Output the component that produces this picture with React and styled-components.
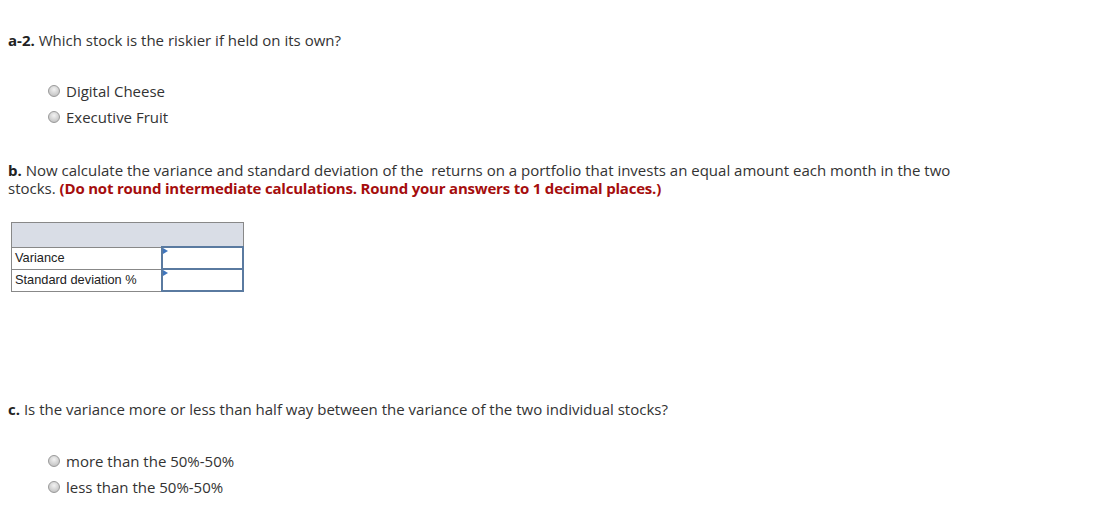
import styled, { createGlobalStyle } from "styled-components";

const Global = createGlobalStyle`
  body {
    margin: 0;
    background: #fff;
    font-family: "Open Sans", "Liberation Sans", sans-serif;
    color: #333;
  }
`;

const Page = styled.div`
  padding: 31px 0 0 8px;
  font-size: 15px;
  line-height: 18px;
`;

const Question = styled.p`
  margin: ${(p) => p.$top || 0}px 0 0;
  max-width: ${(p) => p.$width || 1000}px;
  b { color: #222; font-weight: 700; }
`;

const Note = styled.strong`
  color: #a50d0d;
  font-weight: 700;
  letter-spacing: -0.2px;
`;

const Choices = styled.div`
  margin: ${(p) => p.$top}px 0 0 40px;
  display: flex;
  flex-direction: column;
  gap: 8px;
`;

const Choice = styled.label`
  display: flex;
  align-items: center;
  gap: 6px;
  height: 18px;
`;

const Radio = styled.span`
  width: 10px;
  height: 10px;
  border-radius: 50%;
  border: 1px solid #999;
  background: radial-gradient(circle at 50% 35%, #f2f2f2 0%, #d2d2d2 55%, #b8b8b8 100%);
`;

const Table = styled.table`
  margin: 25px 0 0 3px;
  border-collapse: collapse;
  font-family: "Liberation Sans", Arial, sans-serif;
  font-size: 12.8px;
  color: #222;
`;

const Head = styled.td`
  height: 21px;
  background: #d9dde6;
  border: 1px solid #888;
`;

const Label = styled.td`
  width: 143px;
  height: 21px;
  padding: 0 3px;
  border: 1px solid #888;
`;

const InputCell = styled.td`
  width: 79px;
  padding: 0;
  border: 2px solid #5a7aa0;
  position: relative;
  &::before {
    content: "";
    position: absolute;
    left: 0;
    top: 0;
    border-left: 5px solid #3f75bd;
    border-top: 3px solid transparent;
    border-bottom: 3px solid transparent;
  }
`;

const options = (list) =>
  list.map((t) => (
    <Choice key={t}>
      <Radio />
      {t}
    </Choice>
  ));

export default function App() {
  return (
    <Page>
      <Global />
      <Question>
        <b>a-2.</b> Which stock is the riskier if held on its own?
      </Question>
      <Choices $top={33}>{options(["Digital Cheese", "Executive Fruit"])}</Choices>
      <Question $top={35} $width={965}>
        <b>b.</b> Now calculate the variance and standard deviation of the&nbsp; returns on a portfolio that invests an equal amount each month in the two stocks.{" "}
        <Note>(Do not round intermediate calculations. Round your answers to 1 decimal places.)</Note>
      </Question>
      <Table>
        <tbody>
          <tr>
            <Head colSpan={2} />
          </tr>
          <tr>
            <Label>Variance</Label>
            <InputCell />
          </tr>
          <tr>
            <Label>Standard deviation %</Label>
            <InputCell />
          </tr>
        </tbody>
      </Table>
      <Question $top={108}>
        <b>c.</b> Is the variance more or less than half way between the variance of the two individual stocks?
      </Question>
      <Choices $top={34}>{options(["more than the 50%-50%", "less than the 50%-50%"])}</Choices>
    </Page>
  );
}
